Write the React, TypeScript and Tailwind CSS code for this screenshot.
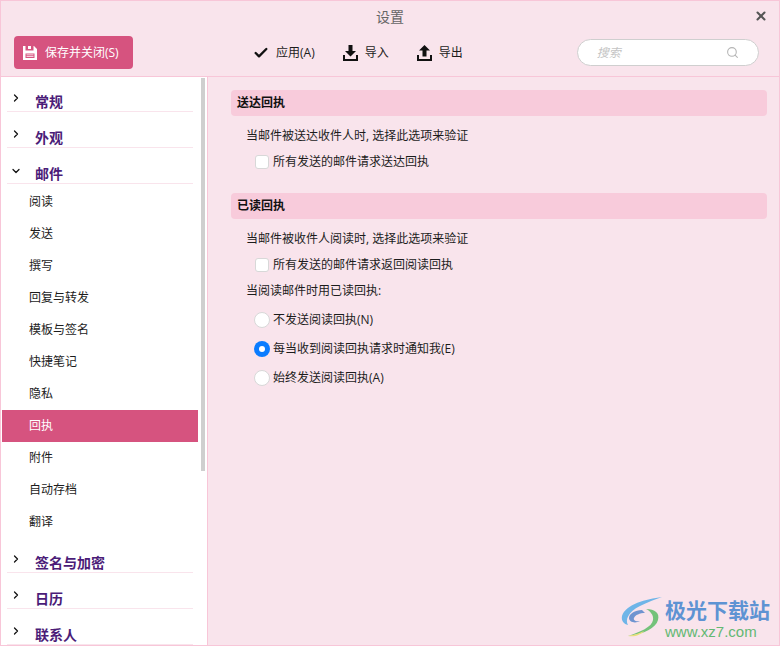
import { Check, ChevronDown, ChevronRight, Search, X } from "lucide-react";

const mailItems = ["阅读", "发送", "撰写", "回复与转发", "模板与签名", "快捷笔记", "隐私", "回执", "附件", "自动存档", "翻译"];

function SaveIcon() {
  return (
    <svg width="16" height="16" viewBox="0 0 16 16" fill="#fff">
      <path d="M1 1h2.5v4.5h8V1h.5l3 3v11H1z M6 1h3v3H6z M3.5 8.5v4.5h9V8.5z" fillRule="evenodd" />
      <path d="M4.5 9.5h7v.8h-7z M4.5 11.3h7v.8h-7z" />
    </svg>
  );
}

function ImportIcon() {
  return (
    <svg width="15" height="16" viewBox="0 0 15 16" fill="#111">
      <path d="M5.5 0h4v6h3.5l-5.5 5.5L2 6h3.5z" />
      <path d="M0 10h2v4h11v-4h2v6H0z" />
    </svg>
  );
}

function ExportIcon() {
  return (
    <svg width="15" height="16" viewBox="0 0 15 16" fill="#111">
      <path d="M7.5 0L13 5.5H9.5v6h-4v-6H2z" />
      <path d="M0 10h2v4h11v-4h2v6H0z" />
    </svg>
  );
}

function NavHeading({ label, open }: { label: string; open?: boolean }) {
  return (
    <div className="relative ml-[6px] w-[186px] h-[20px] border-b border-[#f9e4ec] pl-[28px] text-[14px] font-bold leading-[19px] text-[#4b1c78]">
      {open ? (
        <ChevronDown size={12} strokeWidth={2.5} className="absolute left-[3px] top-[1px] text-[#111]" />
      ) : (
        <ChevronRight size={12} strokeWidth={2.5} className="absolute left-[3px] top-[0px] text-[#111]" />
      )}
      {label}
    </div>
  );
}

function Radio({ label, checked }: { label: string; checked?: boolean }) {
  return (
    <div className="flex h-[29px] items-center pl-[8px]">
      {checked ? (
        <span className="mr-[3px] flex h-[16px] w-[16px] items-center justify-center rounded-full bg-[#0a7cff]">
          <span className="h-[6px] w-[6px] rounded-full bg-white" />
        </span>
      ) : (
        <span className="mr-[3px] h-[16px] w-[16px] rounded-full border border-[#d8d8d8] bg-white" />
      )}
      <span>{label}</span>
    </div>
  );
}

function Checkbox({ label }: { label: string }) {
  return (
    <div className="flex h-[20px] items-center pl-[9px]">
      <span className="mr-[4px] h-[14px] w-[14px] rounded-[3px] border border-[#d8d8d8] bg-white" />
      <span>{label}</span>
    </div>
  );
}

export default function App() {
  return (
    <div className="relative flex h-[646px] w-[780px] flex-col overflow-hidden border border-[#f8c6d8] bg-[#f9e4ec] font-['Open_Sans','Noto_Sans_CJK_SC',sans-serif] text-[12px] leading-[20px] text-[#1c1c1c]">
      <header className="relative h-[76px] shrink-0 border-b border-[#f8c6d8]">
        <div className="pt-[6px] text-center text-[14px] leading-[20px] text-[#666]">设置</div>
        <X size={14} strokeWidth={3.5} className="absolute right-[11px] top-[8px] text-[#555]" />
        <div className="mt-[9px] flex items-center pl-[13px]">
          <button className="flex h-[33px] w-[119px] items-center gap-[7px] rounded-[4px] bg-[#d6537f] pl-[8px] text-[12px] text-white">
            <SaveIcon />
            保存并关闭(S)
          </button>
          <div className="ml-[120px] flex items-center">
            <Check size={16} strokeWidth={3.5} className="text-[#111]" />
            <span className="ml-[7px]">应用(A)</span>
            <span className="ml-[28px]"><ImportIcon /></span>
            <span className="ml-[7px]">导入</span>
            <span className="ml-[28px]"><ExportIcon /></span>
            <span className="ml-[7px]">导出</span>
          </div>
          <div className="ml-[114px] flex h-[27px] w-[182px] items-center justify-between rounded-full border border-[#cfcfcf] bg-white pl-[19px] pr-[19px] text-[12px] italic text-[#c4c4c4]">
            搜索
            <Search size={13} className="text-[#b5b5b5]" />
          </div>
        </div>
      </header>

      <div className="flex min-h-0 flex-1">
        <nav className="relative h-full w-[207px] shrink-0 overflow-hidden border-r border-[#f8c6d8] bg-white pt-[15px]">
          <div className="absolute right-[2px] top-[1px] h-[393px] w-[4px] bg-[#cfcfcf]" />
          <NavHeading label="常规" />
          <div className="mt-[16px]"><NavHeading label="外观" /></div>
          <div className="mt-[16px]"><NavHeading label="邮件" open /></div>
          <ul className="mt-[2px] mb-[15px]">
            {mailItems.map((item) => (
              <li
                key={item}
                className={
                  item === "回执"
                    ? "ml-[1px] h-[32px] w-[196px] bg-[#d6537f] pl-[27px] leading-[32px] text-white"
                    : "ml-[1px] h-[32px] w-[196px] pl-[27px] leading-[32px]"
                }
              >
                {item}
              </li>
            ))}
          </ul>
          <NavHeading label="签名与加密" />
          <div className="mt-[16px]"><NavHeading label="日历" /></div>
          <div className="mt-[16px]"><NavHeading label="联系人" /></div>
        </nav>

        <main className="flex-1 pl-[23px] pr-[12px] pt-[13px]">
          <section>
            <h2 className="h-[26px] rounded-[4px] bg-[#f8cbdb] pl-[6px] text-[12px] font-bold leading-[26px] text-[#111]">送达回执</h2>
            <div className="mt-[10px] pl-[15px]">当邮件被送达收件人时, 选择此选项来验证</div>
            <div className="mt-[6px] pl-[15px]"><Checkbox label="所有发送的邮件请求送达回执" /></div>
          </section>
          <section className="mt-[21px]">
            <h2 className="h-[26px] rounded-[4px] bg-[#f8cbdb] pl-[6px] text-[12px] font-bold leading-[26px] text-[#111]">已读回执</h2>
            <div className="mt-[10px] pl-[15px]">当邮件被收件人阅读时, 选择此选项来验证</div>
            <div className="mt-[6px] pl-[15px]"><Checkbox label="所有发送的邮件请求返回阅读回执" /></div>
            <div className="mt-[6px] pl-[15px]">当阅读邮件时用已读回执:</div>
            <div className="mt-[4px] pl-[15px]">
              <Radio label="不发送阅读回执(N)" />
              <Radio label="每当收到阅读回执请求时通知我(E)" checked />
              <Radio label="始终发送阅读回执(A)" />
            </div>
          </section>
        </main>
      </div>

      <div className="absolute right-[9px] top-[595px] flex items-center">
        <svg width="44" height="44" viewBox="0 0 44 44" fill="none">
          <path d="M42 1C26 3 6 8 2 20c-1 5 2 8 6 9C5 24 8 16 20 10 28 6 36 3 42 1z" fill="#6fb5e8" />
          <path d="M22 14c-7 0-13 4-13 8s6 6 11 3c-4 1-7-1-6-3 1-3 6-5 11-5z" fill="#6f94d0" />
          <path d="M26 13c9 0 14 4 12 11-2 8-14 14-30 16 12-4 24-9 25-16 1-5-3-9-7-11z" fill="#74c27a" />
          <path d="M8 40c6-1 12-3 16-5-3 4-9 6-16 5z" fill="#e9e07a" />
        </svg>
        <div className="ml-[1px] flex flex-col items-start">
          <span className="text-[21px] font-bold leading-[26px] text-[#5e93d3]">极光下载站</span>
          <span className="font-['Liberation_Sans',sans-serif] text-[15px] leading-[17px] text-[#63b873]">www.xz7.com</span>
        </div>
      </div>
    </div>
  );
}
